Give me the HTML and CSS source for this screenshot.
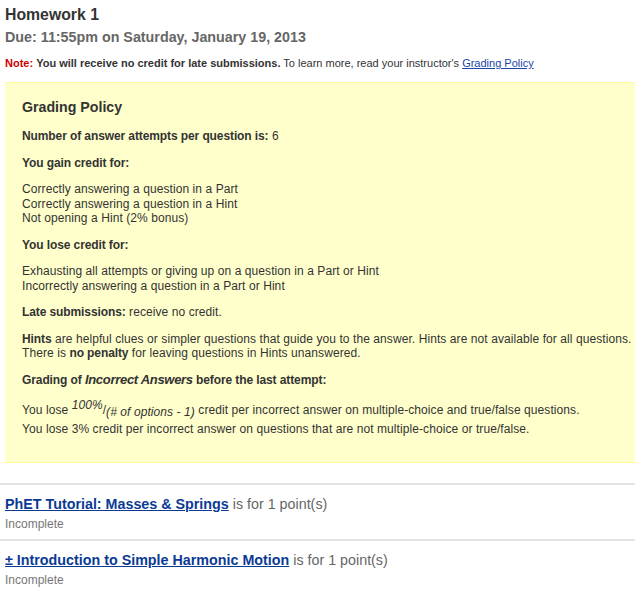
FILE: index.html
```html
<!DOCTYPE html>
<html>
<head>
<meta charset="utf-8">
<link rel="stylesheet" href="styles.css">
</head>
<body>
<div class="header">
  <h1 class="title">Homework 1</h1>
  <h2 class="due">Due: 11:55pm on Saturday, January 19, 2013</h2>
  <p class="note"><span class="note-label">Note:</span> <b>You will receive no credit for late submissions.</b> To learn more, read your instructor's <a href="#" class="small-link">Grading Policy</a></p>
</div>
<div class="policy">
  <h3 class="policy-title">Grading Policy</h3>
  <p><b>Number of answer attempts per question is:</b> 6</p>
  <p><b>You gain credit for:</b></p>
  <p>Correctly answering a question in a Part<br>Correctly answering a question in a Hint<br>Not opening a Hint (2% bonus)</p>
  <p><b>You lose credit for:</b></p>
  <p>Exhausting all attempts or giving up on a question in a Part or Hint<br>Incorrectly answering a question in a Part or Hint</p>
  <p><b>Late submissions:</b> receive no credit.</p>
  <p class="nowrap"><b>Hints</b> are helpful clues or simpler questions that guide you to the answer. Hints are not available for all questions.<br>There is <b>no penalty</b> for leaving questions in Hints unanswered.</p>
  <p><b>Grading of <i class="big-i">Incorrect Answers</i> before the last attempt:</b></p>
  <p class="lose">You lose <sup class="num">100%</sup>/<sub class="den">(# of options - 1)</sub> credit per incorrect answer on multiple-choice and true/false questions.<br>You lose 3% credit per incorrect answer on questions that are not multiple-choice or true/false.</p>
</div>
<ul class="items">
  <li class="item">
    <div class="item-line"><a href="#" class="item-link">PhET Tutorial: Masses &amp; Springs</a> is for 1 point(s)</div>
    <div class="status">Incomplete</div>
  </li>
  <li class="item">
    <div class="item-line"><a href="#" class="item-link">± Introduction to Simple Harmonic Motion</a> is for 1 point(s)</div>
    <div class="status">Incomplete</div>
  </li>
</ul>
</body>
</html>
```
FILE: styles.css
```css
html, body {
  margin: 0;
  padding: 0;
  background: #fff;
}
body {
  font-family: "Liberation Sans", Arial, sans-serif;
  color: #333;
  width: 660px;
  overflow: hidden;
}
.header {
  padding: 5px 5px 0 5px;
}
.title {
  font-size: 15.8px;
  font-weight: bold;
  margin: 0;
  line-height: 20px;
  color: #333;
}
.due {
  font-size: 14.3px;
  font-weight: bold;
  color: #666;
  margin: 2px 0 0 0;
  line-height: 20px;
}
.note {
  font-size: 11px;
  margin: 9px 0 0 0;
  line-height: 14px;
  color: #333;
}
.note-label {
  color: #cc0000;
  font-weight: bold;
}
.small-link {
  color: #1a44a8;
}
.policy {
  margin: 12px 0 0 5px;
  background: #ffffcc;
  border-top: 1px solid #ffff99;
  border-bottom: 1px solid #ffff99;
  padding: 15px 17px 23px 17px;
  font-size: 12px;
  letter-spacing: 0.08px;
  line-height: 14.5px;
}
.policy b {
  letter-spacing: -0.1px;
}
.policy-title {
  font-size: 14.2px;
  font-weight: bold;
  margin: 0 0 13px 0;
  line-height: 18px;
  letter-spacing: 0;
}
.policy p {
  margin: 0 0 12px 0;
}
.policy p:last-child {
  margin-bottom: 0;
}
.policy p.nowrap {
  white-space: nowrap;
}
.policy .big-i {
  font-size: 13px;
  letter-spacing: -0.3px;
}
.policy p.lose {
  line-height: 19px;
  margin-top: 14px;
}
.num {
  font-style: italic;
  font-size: 12px;
  vertical-align: 5px;
  line-height: 0;
}
.den {
  font-style: italic;
  font-size: 12px;
  vertical-align: -2px;
  line-height: 0;
}
.items {
  list-style: none;
  margin: 20px 0 0 0;
  padding: 0;
}
.item {
  border-top: 2px solid #e3e3e3;
  padding: 10px 5px 8px 5px;
}
.item-line {
  font-size: 14.3px;
  color: #666;
  line-height: 18px;
}
.item-link {
  color: #0b3a94;
  font-weight: bold;
}
.status {
  font-size: 12px;
  color: #777;
  margin-top: 4px;
  line-height: 14px;
}
```
